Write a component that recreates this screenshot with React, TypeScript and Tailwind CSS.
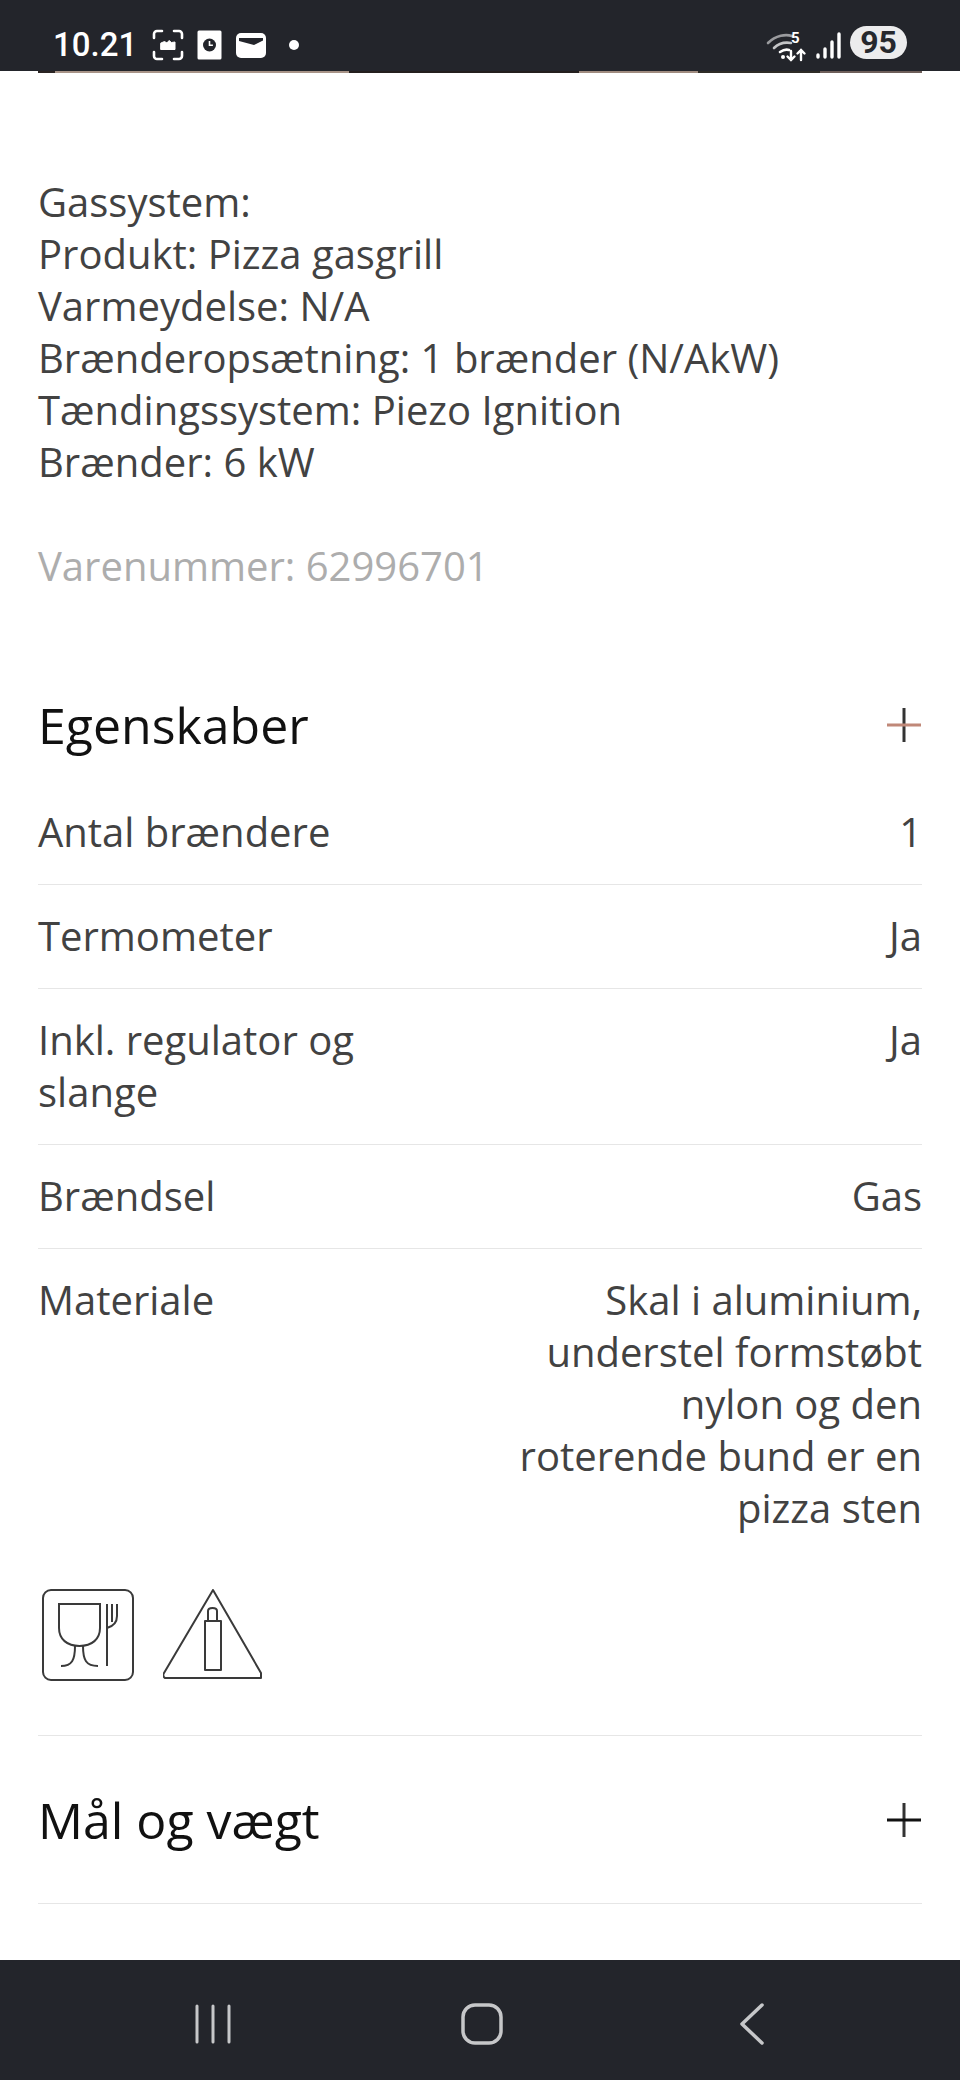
import React from 'react';

const specs = ['Gassystem:', 'Produkt: Pizza gasgrill', 'Varmeydelse: N/A', 'Brænderopsætning: 1 brænder (N/AkW)', 'Tændingssystem: Piezo Ignition', 'Brænder: 6 kW'];

const rows = [
  { label: ['Antal brændere'], value: ['1'] },
  { label: ['Termometer'], value: ['Ja'] },
  { label: ['Inkl. regulator og', 'slange'], value: ['Ja'] },
  { label: ['Brændsel'], value: ['Gas'] },
  { label: ['Materiale'], value: ['Skal i aluminium,', 'understel formstøbt', 'nylon og den', 'roterende bund er en', 'pizza sten'] },
];

function StatusBar() {
  return (
    <div className="h-[71px] shrink-0 bg-[#23252b] flex items-start pl-[53px] pr-[53px] pt-[28px] justify-between">
      <div className="flex items-center h-[34px] text-white">
        <span className="text-[33px] leading-[34px] font-medium font-['Roboto',sans-serif] w-[99px]">10.21</span>
        <svg width="32" height="32" viewBox="0 0 32 32" fill="none" stroke="white" strokeWidth="2.6" strokeLinecap="round">
          <path d="M2 9V5a3 3 0 0 1 3-3h5M22 2h5a3 3 0 0 1 3 3v4M30 23v4a3 3 0 0 1-3 3h-5M10 30H5a3 3 0 0 1-3-3v-4" />
          <path d="M9 14l3.500-1.500 2.500 1.500 2-2.500 2.500 2 3.500-0.500V20.500H9z" fill="white" strokeWidth="1" />
        </svg>
        <svg className="ml-[13px]" width="25" height="30" viewBox="0 0 25 30">
          <rect x="0.5" y="0.5" width="24" height="29" rx="1.5" fill="white" />
          <circle cx="12.5" cy="15" r="6.5" fill="#23252b" />
          <path d="M12.5 11v4.200h3.400" stroke="white" strokeWidth="1.6" fill="none" />
        </svg>
        <svg className="ml-[14px]" width="30" height="25" viewBox="0 0 30 25">
          <rect width="30" height="25" rx="5" fill="white" />
          <path d="M3 5h24v2.500l-9 4.500L3 8z" fill="#23252b" />
        </svg>
        <span className="ml-[23px] w-[10px] h-[10px] rounded-full bg-white" />
      </div>
      <div className="flex items-start text-white -mt-[2px]">
        <svg className="mt-[6px]" width="42" height="30" viewBox="0 0 42 30" fill="none" strokeLinecap="round">
          <path d="M2 11C10 3 20 2 26 4" stroke="#9a9b9e" strokeWidth="2.6" />
          <path d="M8 16c5-5 11-6 17-5" stroke="#c4c5c7" strokeWidth="2.6" />
          <path d="M14 20c3-2 6-3 9-2" stroke="white" strokeWidth="2.6" />
          <circle cx="17" cy="25" r="2" fill="white" />
          <path d="M25 19v9M21.500 24.500l3.500 3.500 3.500-3.500M35 28v-10M31.500 21.500l3.500-3.500 3.500 3.500" stroke="white" strokeWidth="2.4" />
        </svg>
        <span className="absolute ml-[25px] mt-[5px] text-[15px] leading-[15px] font-bold font-['Roboto',sans-serif]">5</span>
        <svg className="ml-[8px] mt-[6px]" width="25" height="27" viewBox="0 0 25 27" stroke="white" strokeWidth="3.4" strokeLinecap="round">
          <path d="M2 25v-2M9 25v-8M16 25V10M23 25V2" />
        </svg>
        <div className="ml-[9px] w-[57px] h-[33px] rounded-[17px] bg-[#ececed] flex items-center justify-center text-[#26282d] text-[32px] leading-[33px] font-bold font-['Roboto',sans-serif]">95</div>
      </div>
    </div>
  );
}

function Plus({ color, thick }: { color: string; thick: number }) {
  return (
    <svg width="34" height="34" viewBox="0 0 34 34">
      <path d="M17 0v34" stroke="#333" strokeWidth={thick} />
      <path d="M0 17h34" stroke={color} strokeWidth={thick} />
    </svg>
  );
}

function NavBar() {
  return (
    <div className="h-[120px] shrink-0 bg-[#23252b] pt-[7px] flex items-center">
      <svg className="ml-[195px]" width="36" height="40" viewBox="0 0 36 40" stroke="#c6c7c9" strokeWidth="3" strokeLinecap="round">
        <path d="M2 2v36M18 2v36M34 2v36" />
      </svg>
      <svg className="ml-[230px]" width="42" height="42" viewBox="0 0 42 42" fill="none" stroke="#c6c7c9" strokeWidth="3.5">
        <rect x="2" y="2" width="38" height="38" rx="12" />
      </svg>
      <svg className="ml-[236px]" width="26" height="42" viewBox="0 0 26 42" fill="none" stroke="#c6c7c9" strokeWidth="3.5" strokeLinecap="round" strokeLinejoin="round">
        <path d="M23 2L3 21l20 19" />
      </svg>
    </div>
  );
}

export default function App() {
  return (
    <div className="w-[960px] h-[2080px] flex flex-col overflow-hidden bg-white font-['Open_Sans',sans-serif] text-[40px] leading-[52px] text-[#424242]">
      <StatusBar />
      <div className="h-[2px] mx-[38px] shrink-0 flex">
        <div className="w-[17px] bg-[#2a2422]" />
        <div className="w-[294px] bg-[#a89488]" />
        <div className="w-[230px] bg-[#241f1e]" />
        <div className="w-[119px] bg-[#a08c80]" />
        <div className="w-[122px] bg-[#2e2c26]" />
        <div className="flex-1 bg-[#6e5f5a]" />
      </div>
      <div className="flex-1 px-[38px] pt-[103px]">
        {specs.map((s) => (
          <div key={s}>{s}</div>
        ))}
        <div className="mt-[52px] text-[#adadad]">Varenummer: 62996701</div>

        <div className="mt-[107px] h-[52px] flex items-center justify-between text-[50px] text-[#111]">
          <span>Egenskaber</span>
          <span className="mr-[1px]"><Plus color="#c08878" thick={3} /></span>
        </div>

        <div className="mt-[30px]">
          {rows.map((r, i) => (
            <div key={i} className={`flex justify-between pt-[25px] ${i < rows.length - 1 ? 'pb-[26px] border-b border-[#e6e6e6]' : ''}`}>
              <div>{r.label.map((l) => <div key={l}>{l}</div>)}</div>
              <div className="text-right">{r.value.map((v) => <div key={v}>{v}</div>)}</div>
            </div>
          ))}
        </div>

        <div className="mt-[55px] flex items-start pb-[54px] border-b border-[#e6e6e6]">
          <svg className="ml-[4px]" width="92" height="92" viewBox="0 0 92 92" fill="none" stroke="#3a3a3a" strokeWidth="2">
            <rect x="1" y="1" width="90" height="90" rx="8" />
            <path d="M17 15h41v24c0 11-8 18-20.500 18S17 50 17 39z" />
            <path d="M33 57c0 14-3 20-14 20M41 57c0 14 3 20 15 20M65 77V39c7-2 10-6 10-12V15M65 39V15M70 33V15" />
          </svg>
          <svg className="ml-[29px]" width="100" height="92" viewBox="0 0 100 92" fill="none" stroke="#3a3a3a" strokeWidth="2" strokeLinejoin="round">
            <path d="M50 1L98 84v5H2c-2-1-2-4-1-5z" />
            <path d="M42 81V32h16v49zM45 32V22c0-4 9-4 9 0v10" />
          </svg>
        </div>

        <div className="h-[168px] flex items-center justify-between text-[50px] text-[#111] border-b border-[#e6e6e6]">
          <span>Mål og vægt</span>
          <span className="mr-[1px]"><Plus color="#111" thick={3} /></span>
        </div>
      </div>
      <NavBar />
    </div>
  );
}
